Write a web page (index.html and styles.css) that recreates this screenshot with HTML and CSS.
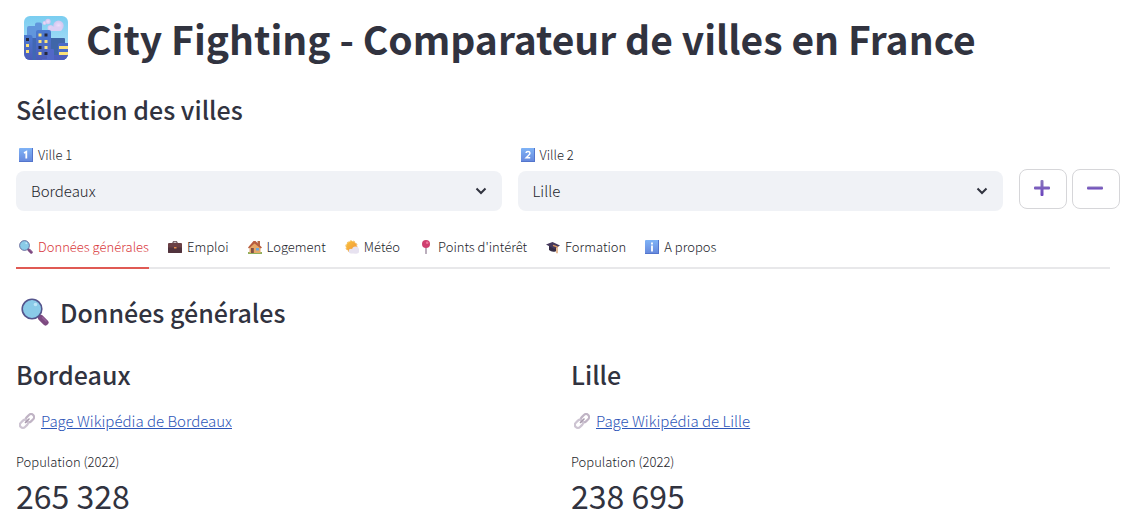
FILE: index.html
```html
<!DOCTYPE html>
<html lang="fr">
<head>
<meta charset="utf-8">
<meta name="viewport" content="width=device-width, initial-scale=1">
<title>City Fighting</title>
<link rel="stylesheet" href="styles.css">
</head>
<body>
<svg class="sprite" aria-hidden="true">
  <defs>
    <linearGradient id="sky" x1="0" y1="0" x2="0" y2="1"><stop offset="0" stop-color="#7acdf0"/><stop offset="1" stop-color="#b9e4fb"/></linearGradient>
    <linearGradient id="tower" x1="0" y1="0" x2="0" y2="1"><stop offset="0" stop-color="#4a7ad0"/><stop offset="1" stop-color="#4c5bb8"/></linearGradient>
    <linearGradient id="key" x1="0" y1="0" x2="0" y2="1"><stop offset="0" stop-color="#7fb3f6"/><stop offset="1" stop-color="#6587dc"/></linearGradient>
    <linearGradient id="violet" x1="0" y1="0" x2="0" y2="1"><stop offset="0" stop-color="#8a78bd"/><stop offset="1" stop-color="#6a42bd"/></linearGradient>
    <radialGradient id="cloud"><stop offset="0" stop-color="#efdcfa"/><stop offset="1" stop-color="#cfc6ef"/></radialGradient>
    <linearGradient id="sun" x1="0" y1="0" x2="1" y2="1"><stop offset="0" stop-color="#f9c23c"/><stop offset="1" stop-color="#f0923a"/></linearGradient>
    <clipPath id="tile"><rect width="44" height="44" rx="6"/></clipPath>
  </defs>
  <symbol id="i-search" viewBox="0 0 28 28">
    <path d="M17 17l3 3" stroke="#5a4a78" stroke-width="3"/>
    <path d="M20 20l4.500 4.500" stroke="#7d4a80" stroke-width="6" stroke-linecap="round"/>
    <path d="M21.500 19.500l3.500 3.500" stroke="#95609a" stroke-width="1.500" stroke-linecap="round"/>
    <circle cx="11" cy="11" r="9.800" fill="#8acbe8" stroke="#54548c" stroke-width="1.600"/>
    <circle cx="14.500" cy="6.500" r="1.800" fill="#c0e6f8"/>
  </symbol>
  <symbol id="i-link" viewBox="0 0 16 16" fill="none" stroke-width="2.200">
    <rect x="6.500" y="2.200" width="9" height="6" rx="3" transform="rotate(-45 11 5.200)" stroke="#c0b4c5"/>
    <rect x=".500" y="7.800" width="9" height="6" rx="3" transform="rotate(-45 5 10.800)" stroke="#cdc4d2"/>
    <path d="M6 10l4.500-4.500" stroke="#a99bad" stroke-width="1.500"/>
  </symbol>
</svg>
<main class="app">
  <h1 class="title">
    <svg class="title-icon" viewBox="0 0 44 44" aria-hidden="true">
      <g clip-path="url(#tile)">
        <rect width="44" height="44" fill="url(#sky)"/>
        <g fill="url(#cloud)"><circle cx="20.500" cy="7" r="2"/><circle cx="24" cy="5.500" r="2.700"/><circle cx="26.500" cy="12" r="3"/><circle cx="34.500" cy="9.700" r="5.200"/></g>
        <rect x="26" y="10.500" width="12" height="4.500" rx="2" fill="#dccff4"/>
        <path d="M3 44V12q0-2 2-2h6V8.500q0-2 2-2h3q2 0 2 2V44z" fill="#6196dc"/>
        <path d="M26 22h14q1 0 1 1v21H26z" fill="#3f66a8"/>
        <path d="M6 22h6v22H6z" fill="#4167b4"/>
        <path d="M0 19h6.500q2 0 2 2v23H0z" fill="url(#tower)"/>
        <path d="M12 44V16q0-2 2-2h11q2 0 2 2v28z" fill="url(#tower)"/>
        <path d="M34 44V29q0-2 2-2h8v17z" fill="#4a6bc8"/>
        <path d="M23 33h6q1 0 1 1v10H18v-1h5z" fill="#5268c8"/>
        <path d="M30 39h14v5H30z" fill="#4e5fbe"/>
        <g fill="#fbe27a"><path d="M2 28h3v3H2zM2 34h3v3H2zM14.500 17.500h3v3h-3zM14.500 24h3v3h-3zM20.500 24h3v3h-3zM20.500 30h3v3h-3zM14.500 36h3v3h-3zM35 30h9v3h-9zM35 36h9v3h-9z"/></g>
        <path fill="#252840" d="M2 22h3v3H2zM20.500 17.500h3v3h-3zM14.500 30h3v3h-3zM20.500 36h3v3h-3z"/>
      </g>
    </svg>
    <span>City Fighting - Comparateur de villes en France</span>
  </h1>

  <h2 class="heading">Sélection des villes</h2>

  <form class="selection">
    <div class="field">
      <label class="label" for="ville1">
        <svg class="emoji" viewBox="0 0 14 14" aria-hidden="true"><rect width="14" height="14" rx="1" fill="url(#key)"/><path d="M0 13.500h14M13.500 0v14" stroke="#5375cc"/><path d="M5 5L7.300 3.800V10.500" fill="none" stroke="#fff" stroke-width="1.800"/></svg>
        Ville 1
      </label>
      <div class="picker">
        <select class="select" id="ville1"><option>Bordeaux</option><option>Lille</option></select>
        <svg class="chevron" viewBox="0 0 12 8" aria-hidden="true"><path d="M1.500 1.500L6 6l4.500-4.500"/></svg>
      </div>
    </div>
    <div class="field">
      <label class="label" for="ville2">
        <svg class="emoji" viewBox="0 0 14 14" aria-hidden="true"><rect width="14" height="14" rx="1" fill="url(#key)"/><path d="M0 13.500h14M13.500 0v14" stroke="#5375cc"/><path d="M5 5q.2-1.500 2-1.500t2 1.500q0 1.200-1.800 2.800L5.200 9.800h4" fill="none" stroke="#fff" stroke-width="1.500"/></svg>
        Ville 2
      </label>
      <div class="picker">
        <select class="select" id="ville2"><option>Lille</option><option>Bordeaux</option></select>
        <svg class="chevron" viewBox="0 0 12 8" aria-hidden="true"><path d="M1.500 1.500L6 6l4.500-4.500"/></svg>
      </div>
    </div>
    <div class="actions">
      <button class="action" type="button" aria-label="Ajouter une ville"><svg class="sign" viewBox="0 0 16 16" aria-hidden="true"><path fill="url(#violet)" d="M6.500 1q0-1 1-1h1q1 0 1 1v5.500H15q1 0 1 1v1q0 1-1 1H9.500V15q0 1-1 1h-1q-1 0-1-1V9.500H1q-1 0-1-1v-1q0-1 1-1h5.500z"/></svg></button>
      <button class="action" type="button" aria-label="Retirer une ville"><svg class="sign" viewBox="0 0 16 16" aria-hidden="true"><rect y="6.500" width="16" height="3" rx="1" fill="url(#violet)"/></svg></button>
    </div>
  </form>

  <div class="tabs" role="tablist">
    <button class="tab tab-active" role="tab" aria-selected="true"><svg class="emoji" aria-hidden="true"><use href="#i-search"/></svg>Données générales</button>
    <button class="tab" role="tab"><svg class="emoji" viewBox="0 0 14 14" aria-hidden="true"><path d="M5 3.500V1.800h4v1.700" fill="none" stroke="#4a3038"/><rect y="3" width="14" height="10" rx="1" fill="#6a4045"/><path d="M0 7.500h14V12q0 1-1 1H1q-1 0-1-1z" fill="#51333d"/><path d="M6 7h2.500v1.500H6z" fill="#e88c4a"/></svg>Emploi</button>
    <button class="tab" role="tab"><svg class="emoji" viewBox="0 0 14 14" aria-hidden="true"><path d="M0 12h14v2H0z" fill="#8fb05c"/><path d="M9.500 1H12v5H9.500z" fill="#b56a45"/><path d="M1.500 6L6 2l6.500 5v6h-11z" fill="#e6a868"/><path d="M0 7.500L5.500 1h2L14 7.500l-1.200 1L6.500 3.500 1 8.500z" fill="#b85e40"/><path d="M3 8h2.800v5H3z" fill="#805045"/><path d="M8 8h3v2.500H8z" fill="#68a9df"/></svg>Logement</button>
    <button class="tab" role="tab"><svg class="emoji" viewBox="0 0 14 14" aria-hidden="true"><circle cx="6.500" cy="6.500" r="5.700" fill="none" stroke="#f0b85a" stroke-dasharray="2 1.500"/><circle cx="6.500" cy="6.500" r="5.400" fill="url(#sun)"/><g fill="#e7e2f0"><circle cx="6" cy="11" r="2.300"/><circle cx="10.500" cy="10" r="3.500"/><rect x="4" y="9.500" width="10" height="4" rx="2"/></g></svg>Météo</button>
    <button class="tab" role="tab"><svg class="emoji" viewBox="0 0 14 14" aria-hidden="true"><path d="M7 7v6.500" stroke="#8d7890" stroke-width="1.200" stroke-linecap="round"/><circle cx="7" cy="4" r="4" fill="#cf3f70"/><circle cx="8.200" cy="2.800" r="1.300" fill="#ed769b"/></svg>Points d'intérêt</button>
    <button class="tab" role="tab"><svg class="emoji" viewBox="0 0 14 14" aria-hidden="true"><path d="M3 6v4q3 2.800 7 1.300V6z" fill="#332b44"/><path d="M0 4.500L6.500 2 14 5.500 8.500 9z" fill="#45395c"/><path d="M7 5.300l4 1.500v6.500" fill="none" stroke="#d9985e" stroke-width="1.300"/></svg>Formation</button>
    <button class="tab" role="tab"><svg class="emoji" viewBox="0 0 14 14" aria-hidden="true"><rect width="14" height="14" rx="1" fill="url(#key)"/><path d="M0 13.500h14M13.500 0v14" stroke="#5375cc"/><path d="M7 2.500v2M7 5.500v6" stroke="#fff" stroke-width="1.800"/></svg>A propos</button>
  </div>

  <h2 class="heading heading-section"><svg class="heading-icon" aria-hidden="true"><use href="#i-search"/></svg>Données générales</h2>

  <div class="cities">
    <section class="city">
      <h3 class="heading">Bordeaux</h3>
      <p class="wiki"><svg class="link-icon" aria-hidden="true"><use href="#i-link"/></svg><a href="#bordeaux">Page Wikipédia de Bordeaux</a></p>
      <p class="metric-label">Population (2022)</p>
      <p class="metric">265 328</p>
    </section>
    <section class="city">
      <h3 class="heading">Lille</h3>
      <p class="wiki"><svg class="link-icon" aria-hidden="true"><use href="#i-link"/></svg><a href="#lille">Page Wikipédia de Lille</a></p>
      <p class="metric-label">Population (2022)</p>
      <p class="metric">238 695</p>
    </section>
  </div>
</main>
</body>
</html>
```
FILE: styles.css
```css
* { box-sizing: border-box; }
body {
  margin: 0;
  background: #fff;
  color: #31333f;
  font-family: "Noto Sans CJK SC", "Noto Sans", sans-serif;
  font-size: 15px;
  font-weight: 300;
  line-height: 24px;
}
h1, h2, h3, p { margin: 0; }
button, select { font: inherit; color: #1c1e2b; }
.sprite { position: absolute; width: 0; height: 0; }
.app { padding: 11px 9px 0 16px; }

.title {
  display: flex;
  align-items: center;
  gap: 18px;
  padding-left: 8px;
  font-size: 39px;
  font-weight: 700;
  line-height: 54px;
}
.title-icon { width: 44px; height: 44px; flex: none; }

.heading {
  font-size: 25px;
  font-weight: 500;
  line-height: 36px;
}
.title + .heading { margin-top: 26px; }
.heading-section {
  display: flex;
  align-items: center;
  gap: 11px;
  margin-top: 25px;
  padding-left: 5px;
}
.heading-icon { width: 28px; height: 28px; flex: none; }

.selection {
  display: grid;
  grid-template-columns: minmax(0, 1fr) minmax(0, 1fr) auto;
  gap: 16px;
  margin-top: 18px;
}
.label {
  display: flex;
  align-items: center;
  gap: 5px;
  padding-left: 3px;
  margin-bottom: 6px;
  color: #1c1e2b;
  font-size: 13px;
  line-height: 20px;
}
.emoji { width: 14px; height: 14px; flex: none; }
.picker { display: grid; align-items: center; }
.picker > * { grid-area: 1 / 1; }
.select {
  width: 100%;
  height: 40px;
  padding: 0 15px;
  border: 0;
  border-radius: 8px;
  background: #f0f2f6;
  appearance: none;
}
.chevron {
  width: 12px;
  height: 8px;
  margin-right: 15px;
  justify-self: end;
  pointer-events: none;
  fill: none;
  stroke: #31333f;
  stroke-width: 2;
}
.actions { display: flex; gap: 5px; margin-top: 24px; }
.action {
  display: grid;
  place-items: center;
  width: 48px;
  height: 40px;
  padding: 0 2px 2px 0;
  border: 1px solid #d6d6d9;
  border-radius: 8px;
  background: #fff;
}
.sign { width: 16px; height: 16px; }

.tabs {
  display: flex;
  gap: 16px;
  margin: 26px 10px 0 0;
  box-shadow: inset 0 -2px #e8e8ea;
}
.tab {
  display: flex;
  align-items: center;
  gap: 5px;
  padding: 0 0 10px 3px;
  border: 0;
  border-bottom: 2px solid transparent;
  background: none;
  font-size: 13px;
  line-height: 20px;
  white-space: nowrap;
}
.tab-active { color: #d9383c; border-color: #e05a54; }

.cities {
  display: grid;
  grid-template-columns: 1fr 1fr;
  gap: 16px;
  margin: 26px 10px 0 0;
}
.wiki {
  display: flex;
  align-items: center;
  gap: 6px;
  margin-top: 17px;
  padding-left: 3px;
}
.wiki a { color: #2d55b8; text-decoration: underline; }
.link-icon { width: 16px; height: 16px; flex: none; }
.metric-label { margin-top: 19px; color: #1c1e2b; font-size: 13px; line-height: 20px; }
.metric { font-size: 32px; font-weight: 400; line-height: 46px; }
```
